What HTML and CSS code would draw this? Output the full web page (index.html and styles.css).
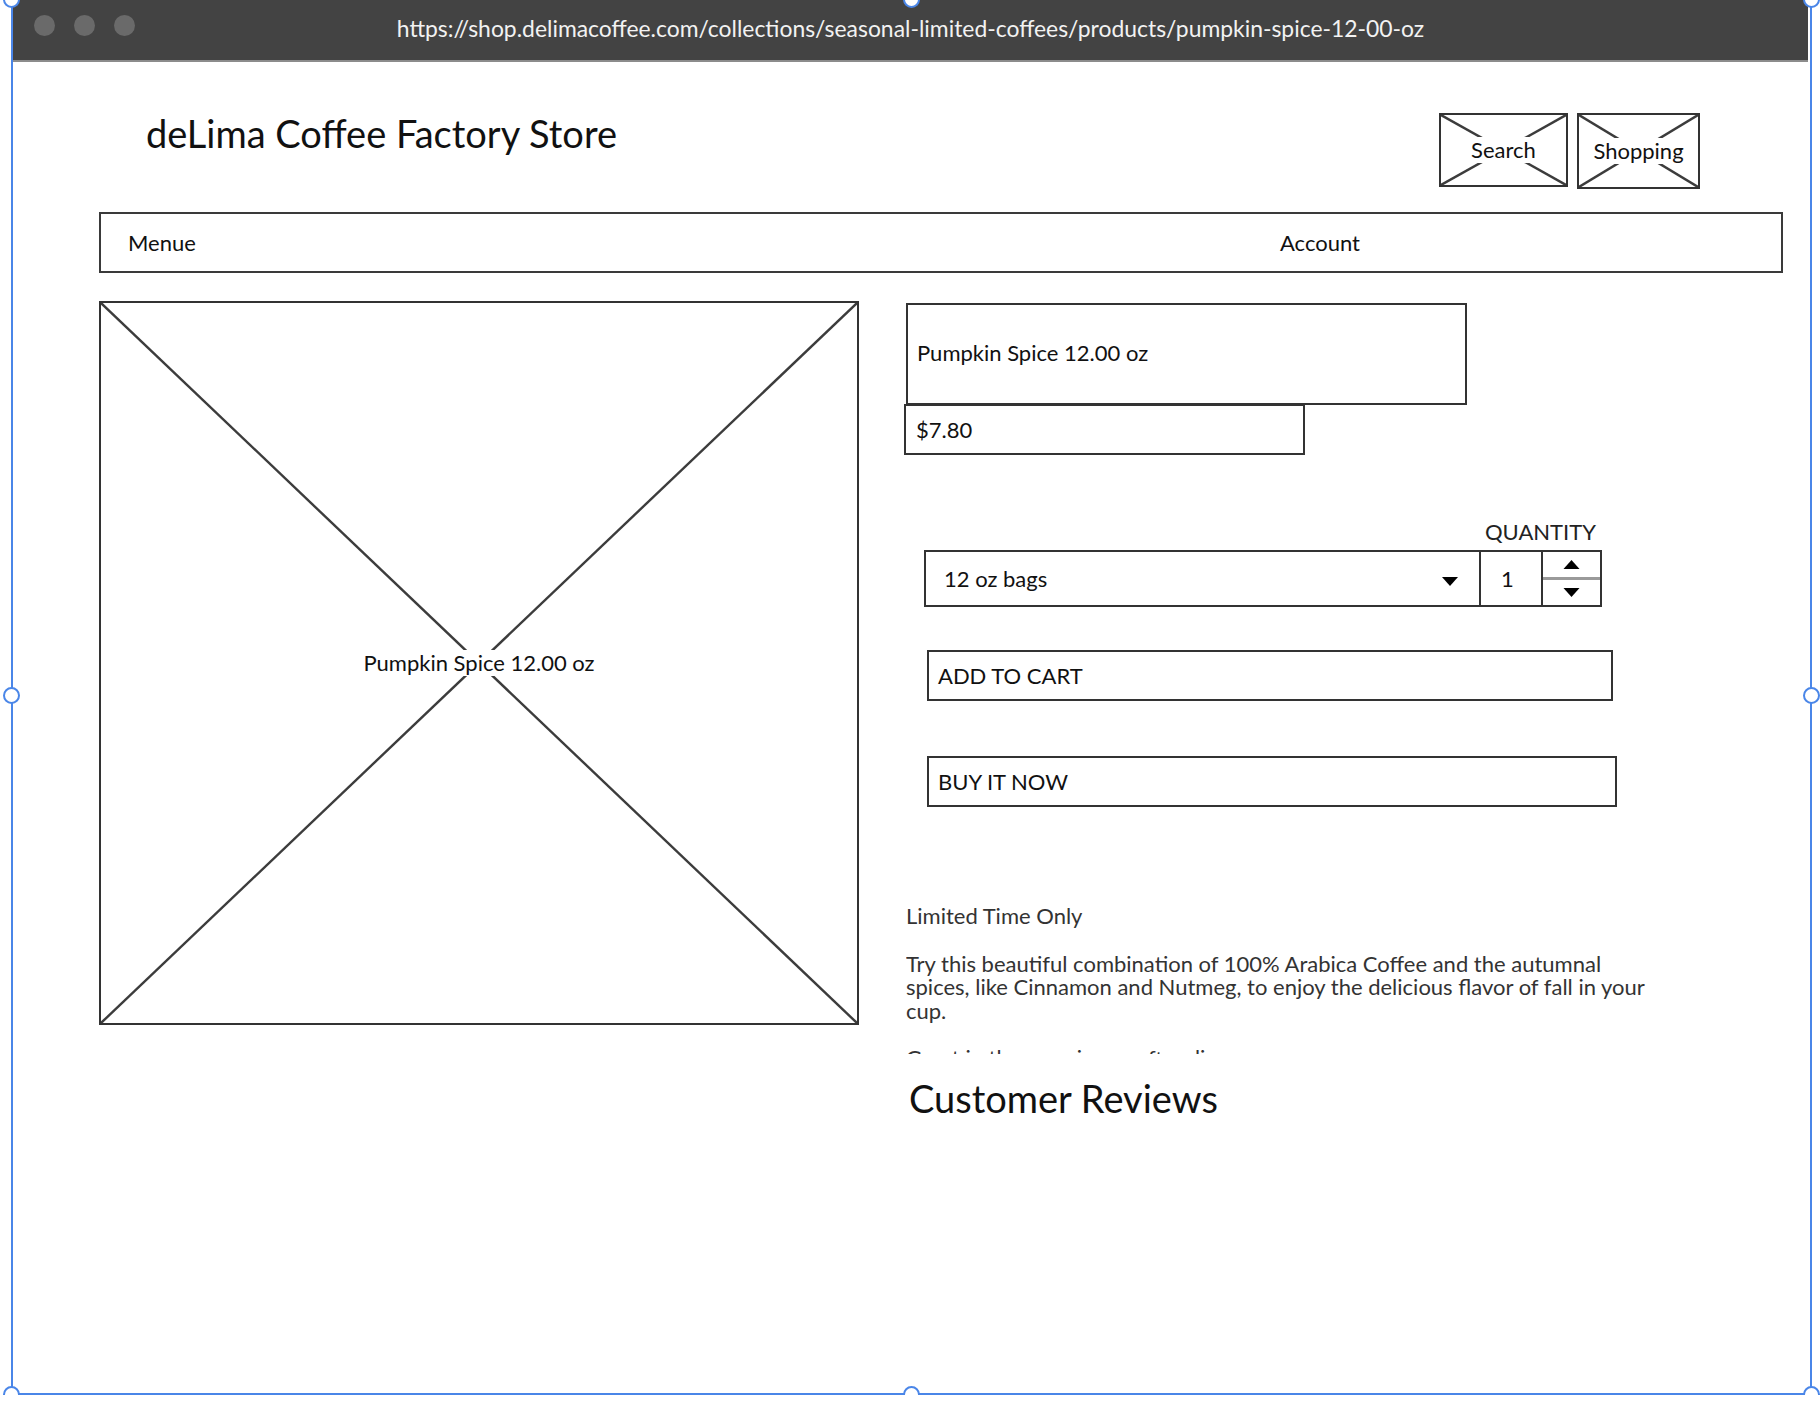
FILE: index.html
```html
<!DOCTYPE html>
<html lang="en">
<head>
    <meta charset="UTF-8">
    <meta name="viewport" content="width=device-width, initial-scale=1.0">
    <title>Pumpkin Spice 12.00 oz - deLima Coffee Factory Store</title>
    <link rel="stylesheet" href="styles.css">
</head>
<body>
    <div class="window">
        <div class="titlebar">
            <div class="dots"><span></span><span></span><span></span></div>
            <div class="url">https://shop.delimacoffee.com/collections/seasonal-limited-coffees/products/pumpkin-spice-12-00-oz</div>
        </div>

        <div class="page">
            <header class="header">
                <div class="brand">deLima Coffee Factory Store</div>
                <div class="header-tools">
                    <div class="ph ph-search">
                        <svg class="ph-x" viewBox="0 0 100 100" preserveAspectRatio="none"><line x1="0" y1="0" x2="100" y2="100"/><line x1="100" y1="0" x2="0" y2="100"/></svg>
                        <span class="ph-label">Search</span>
                    </div>
                    <div class="ph ph-cart">
                        <svg class="ph-x" viewBox="0 0 100 100" preserveAspectRatio="none"><line x1="0" y1="0" x2="100" y2="100"/><line x1="100" y1="0" x2="0" y2="100"/></svg>
                        <span class="ph-label">Shopping</span>
                    </div>
                </div>
            </header>

            <nav class="nav">
                <span class="nav-menu">Menue</span>
                <span class="nav-account">Account</span>
            </nav>

            <main class="product">
                <div class="gallery">
                    <svg class="ph-x" viewBox="0 0 100 100" preserveAspectRatio="none"><line x1="0" y1="0" x2="100" y2="100"/><line x1="100" y1="0" x2="0" y2="100"/></svg>
                    <span class="ph-label">Pumpkin Spice 12.00 oz</span>
                </div>

                <section class="details">
                    <div class="prod-title">Pumpkin Spice 12.00 oz</div>
                    <div class="prod-price">$7.80</div>

                    <div class="buy-row">
                        <div class="variant">
                            <span>12 oz bags</span>
                            <svg class="caret" viewBox="0 0 16 9"><polygon points="0,0 16,0 8,9"/></svg>
                        </div>
                        <div class="qty-group">
                            <div class="qty-label">QUANTITY</div>
                            <div class="qty">
                                <div class="qty-value">1</div>
                                <div class="qty-spin">
                                    <span class="spin"><svg viewBox="0 0 16 9"><polygon points="0,9 16,9 8,0"/></svg></span>
                                    <span class="spin"><svg viewBox="0 0 16 9"><polygon points="0,0 16,0 8,9"/></svg></span>
                                </div>
                            </div>
                        </div>
                    </div>

                    <button class="btn btn-cart">ADD TO CART</button>
                    <button class="btn btn-buy">BUY IT NOW</button>

                    <div class="desc">
                        <p>Limited Time Only</p>
                        <p>Try this beautiful combination of 100% Arabica Coffee and the autumnal spices, like Cinnamon and Nutmeg, to enjoy the delicious flavor of fall in your cup.</p>
                        <p>Great in the morning or after dinner.</p>
                    </div>

                    <h2 class="reviews">Customer Reviews</h2>
                </section>
            </main>
        </div>

        <span class="handle h-tl"></span>
        <span class="handle h-tm"></span>
        <span class="handle h-tr"></span>
        <span class="handle h-ml"></span>
        <span class="handle h-mr"></span>
        <span class="handle h-bl"></span>
        <span class="handle h-bm"></span>
        <span class="handle h-br"></span>
    </div>
</body>
</html>
```

FILE: styles.css
```css
body {
    margin: 0;
    font-family: Lato, "Open Sans", Arial, sans-serif;
    color: #111;
    background-color: #fff;
}
.window {
    position: relative;
    box-sizing: border-box;
    width: 1801px;
    height: 1395px;
    margin-left: 11px;
    border: 2px solid #4a86e8;
    border-top: none;
    box-shadow: 0 3px 0 #7c7c7c;
}

/* browser chrome */
.titlebar {
    display: grid;
    grid-template-columns: 1fr auto 1fr;
    align-items: start;
    height: 60px;
    background-color: #434343;
    border-bottom: 2px solid #8c8c8c;
    margin-right: 2px;
}
.dots {
    display: flex;
    gap: 19px;
    padding: 15px 0 0 21px;
}
.dots span {
    width: 21px;
    height: 21px;
    border-radius: 50%;
    background-color: #6a6a6a;
}
.url {
    padding-top: 14px;
    color: #f2f2f2;
    font-size: 22.9px;
    line-height: 28px;
}

/* page */
.page {
    padding-left: 86px;
}
.header {
    display: flex;
    justify-content: space-between;
    align-items: flex-start;
    height: 150px;
    box-sizing: border-box;
    padding: 51px 110px 0 47px;
}
.brand {
    margin-top: -2px;
    font-size: 38px;
    line-height: 44px;
}
.header-tools {
    display: flex;
    gap: 9px;
}
.ph {
    position: relative;
    display: flex;
    justify-content: center;
    align-items: center;
    box-sizing: border-box;
    border: 2px solid #333;
}
.ph-search {
    width: 129px;
    height: 74px;
}
.ph-cart {
    width: 123px;
    height: 76px;
}
.ph-x {
    position: absolute;
    top: 0;
    left: 0;
    width: 100%;
    height: 100%;
}
.ph-x line {
    stroke: #3c3c3c;
    stroke-width: 2.4;
    vector-effect: non-scaling-stroke;
}
.ph-label {
    position: relative;
    background-color: #fff;
    padding: 0 2px;
    font-size: 22px;
    line-height: 26px;
}

.nav {
    display: grid;
    grid-template-columns: 1152px auto;
    align-items: center;
    box-sizing: border-box;
    width: 1684px;
    height: 61px;
    padding-left: 27px;
    border: 2px solid #3a3a3a;
    font-size: 22px;
}

/* product */
.product {
    display: flex;
    align-items: flex-start;
    margin-top: 28px;
}
.gallery {
    position: relative;
    display: flex;
    justify-content: center;
    align-items: center;
    box-sizing: border-box;
    width: 760px;
    height: 724px;
    border: 2px solid #333;
}
.gallery .ph-label {
    padding: 0 1px;
}
.details {
    display: flex;
    flex-direction: column;
    align-items: flex-start;
    margin-left: 47px;
    font-size: 22px;
}
.prod-title {
    display: flex;
    align-items: center;
    box-sizing: border-box;
    width: 561px;
    height: 102px;
    margin-top: 2px;
    padding: 0 0 3px 9px;
    border: 2px solid #333;
}
.prod-price {
    display: flex;
    align-items: center;
    box-sizing: border-box;
    width: 401px;
    height: 51px;
    margin: -1px 0 0 -2px;
    padding-left: 10px;
    border: 2px solid #333;
}

.buy-row {
    display: flex;
    align-items: flex-end;
    margin: 64px 0 0 18px;
}
.variant {
    display: flex;
    justify-content: space-between;
    align-items: center;
    box-sizing: border-box;
    width: 557px;
    height: 57px;
    padding: 0 21px 0 18px;
    border: 2px solid #333;
}
.caret {
    width: 16px;
    height: 9px;
    margin-top: 6px;
}
.qty-group {
    display: flex;
    flex-direction: column;
    align-items: center;
    margin-left: -2px;
}
.qty-label {
    margin-bottom: 5px;
    color: #222;
    line-height: 26px;
}
.qty {
    display: flex;
}
.qty-value {
    display: flex;
    align-items: center;
    box-sizing: border-box;
    width: 64px;
    height: 57px;
    padding-left: 20px;
    border: 2px solid #333;
}
.qty-spin {
    display: flex;
    flex-direction: column;
    box-sizing: border-box;
    width: 61px;
    height: 57px;
    margin-left: -2px;
    border: 2px solid #333;
}
.spin {
    flex: 1;
    display: flex;
    justify-content: center;
    align-items: center;
}
.spin + .spin {
    border-top: 3px solid #9a9a9a;
}
.spin svg {
    width: 17px;
    height: 9px;
}

.btn {
    display: flex;
    align-items: center;
    box-sizing: border-box;
    height: 51px;
    padding: 0 0 0 9px;
    border: 2px solid #333;
    background-color: #fff;
    color: #111;
    font-family: inherit;
    font-size: 22px;
    cursor: pointer;
}
.btn-cart {
    width: 686px;
    margin: 43px 0 0 21px;
}
.btn-buy {
    width: 690px;
    margin: 55px 0 0 21px;
}

.desc {
    width: 745px;
    height: 150px;
    margin-top: 97px;
    overflow: hidden;
    color: #333;
    line-height: 23.5px;
}
.desc p {
    margin: 0 0 24px;
}
.reviews {
    margin: 22px 0 0 3px;
    font-size: 38px;
    font-weight: normal;
    line-height: 44px;
    color: #111;
}

/* selection handles of the wireframe tool */
.handle {
    position: absolute;
    width: 13px;
    height: 13px;
    border: 2px solid #4a86e8;
    border-radius: 50%;
    background-color: #fff;
}
.h-tl, .h-ml, .h-bl { left: -10px; }
.h-tr, .h-mr, .h-br { right: -10px; }
.h-tm, .h-bm { left: 890px; }
.h-tl, .h-tm, .h-tr { top: -9px; }
.h-ml, .h-mr { top: 687px; }
.h-bl, .h-bm, .h-br { bottom: -10px; }
```
